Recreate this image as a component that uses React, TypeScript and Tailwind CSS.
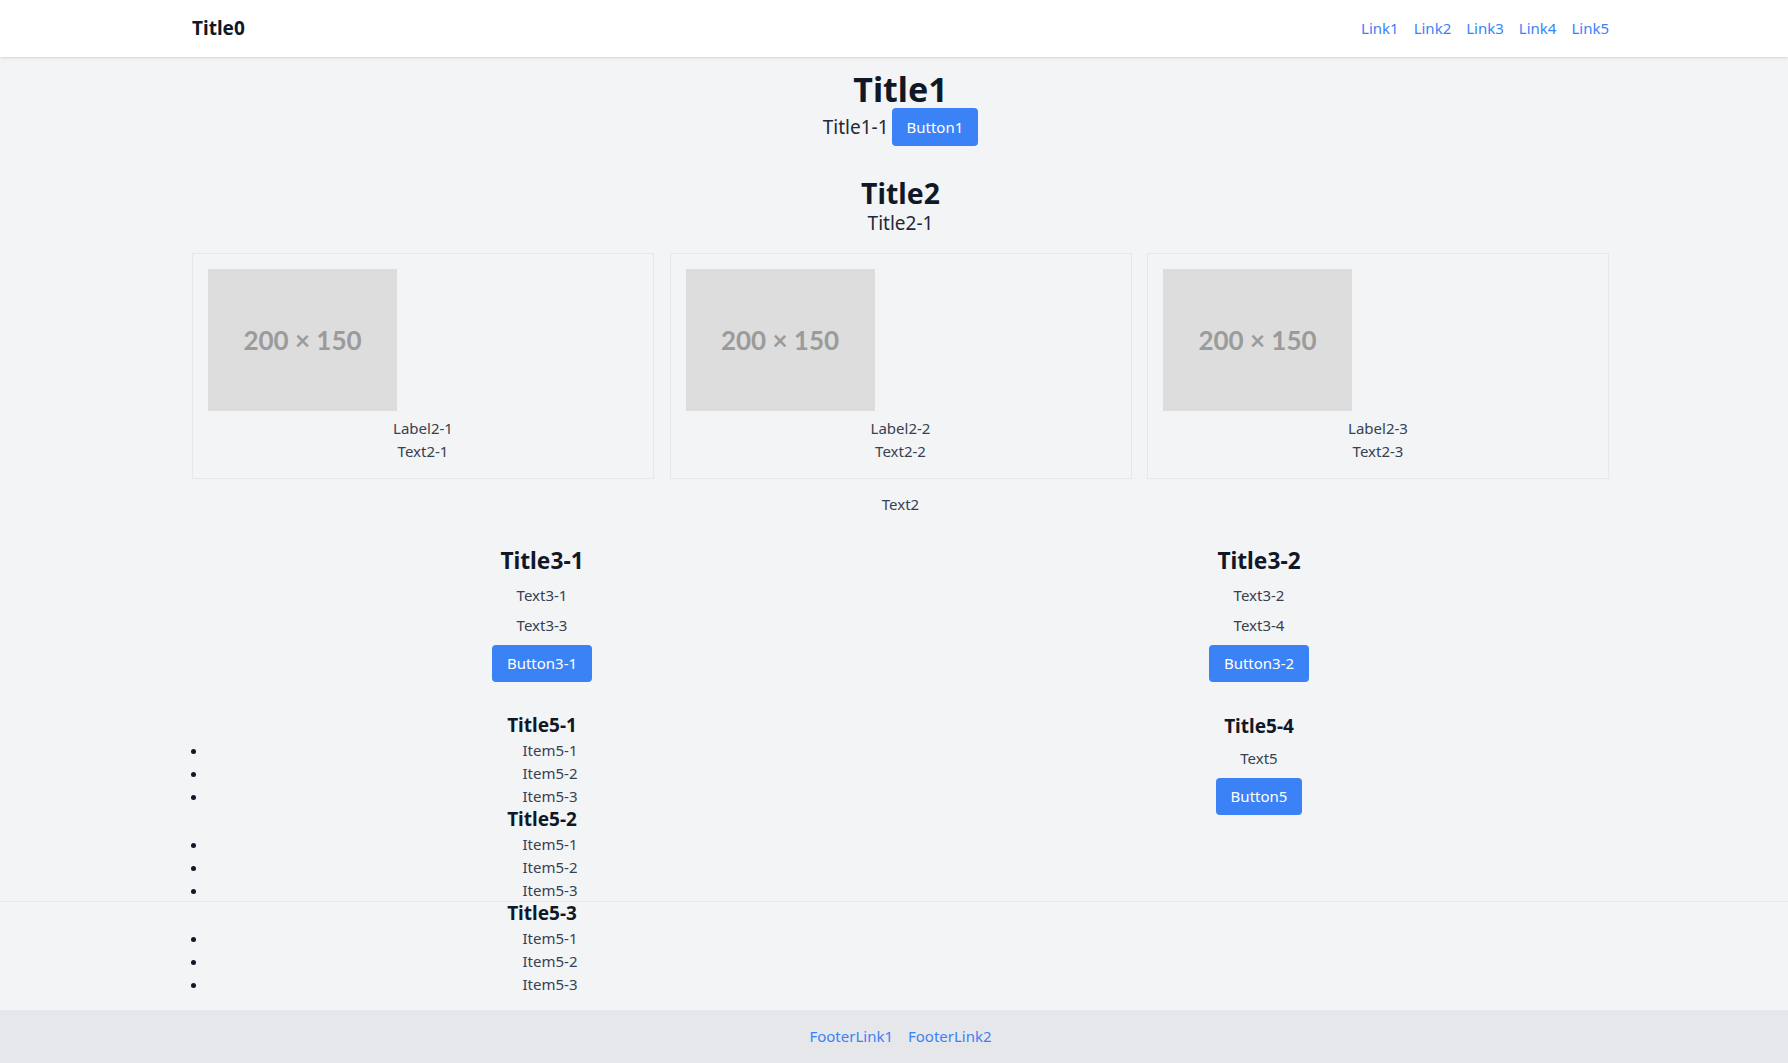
import React from "react";

const cards = [
  { label: "Label2-1", text: "Text2-1" },
  { label: "Label2-2", text: "Text2-2" },
  { label: "Label2-3", text: "Text2-3" },
];

const lists = ["Title5-1", "Title5-2", "Title5-3"];
const items = ["Item5-1", "Item5-2", "Item5-3"];

function Button({ label }: { label: string }) {
  return (
    <button className="rounded-[4px] bg-[#3b82f6] px-[15px] py-[7.5px] text-[15px] leading-[22.7px] text-white">
      {label}
    </button>
  );
}

function Placeholder() {
  return (
    <div className="flex h-[142px] w-[189px] items-center justify-center bg-[#dddddd] font-['Lato',sans-serif] text-[26px] font-bold text-[#9b9b9b]">
      200 × 150
    </div>
  );
}

export default function App() {
  return (
    <div className="relative flex min-h-screen flex-col bg-gray-100 font-['Noto_Sans','Segoe_UI',sans-serif] text-[15px] leading-[22.7px] text-gray-700">
      <header className="relative z-10 flex h-[57px] items-center justify-between bg-white pl-[192px] pr-[179px] shadow">
        <h1 className="text-[19px] font-bold text-gray-900">Title0</h1>
        <nav className="flex gap-[15px] text-[#3b82f6]">
          <a href="#">Link1</a>
          <a href="#">Link2</a>
          <a href="#">Link3</a>
          <a href="#">Link4</a>
          <a href="#">Link5</a>
        </nav>
      </header>

      <main className="flex-1 pl-[192px] pr-[179px] pt-[13px] pb-[13px]">
        <section className="flex flex-col items-center">
          <h2 className="text-[34px] leading-[38px] font-bold text-gray-900">Title1</h2>
          <div className="flex items-center gap-[3px]">
            <span className="text-[19px] leading-[26.5px] text-gray-800">Title1-1</span>
            <Button label="Button1" />
          </div>
        </section>

        <section className="mt-[30px] flex flex-col items-center">
          <h2 className="text-[28.4px] leading-[34px] font-bold text-gray-900">Title2</h2>
          <p className="text-[19px] leading-[26.5px] text-gray-800">Title2-1</p>
        </section>

        <div className="mt-[17px] grid grid-cols-3 gap-[15.5px]">
          {cards.map((c) => (
            <div key={c.label} className="flex flex-col border border-gray-200 p-[15px]">
              <Placeholder />
              <div className="mt-[6px] text-center">
                <p>{c.label}</p>
                <p>{c.text}</p>
              </div>
            </div>
          ))}
        </div>

        <p className="mt-[14px] text-center">Text2</p>

        <div className="mt-[31px] grid grid-cols-2 gap-[17px] text-center">
          <div className="flex flex-col items-center gap-[7.6px]">
            <h3 className="text-[22.7px] leading-[30px] font-bold text-gray-900">Title3-1</h3>
            <p>Text3-1</p>
            <p>Text3-3</p>
            <Button label="Button3-1" />
          </div>
          <div className="flex flex-col items-center gap-[7.6px]">
            <h3 className="text-[22.7px] leading-[30px] font-bold text-gray-900">Title3-2</h3>
            <p>Text3-2</p>
            <p>Text3-4</p>
            <Button label="Button3-2" />
          </div>
        </div>

        <div className="mt-[31px] grid grid-cols-2 gap-[17px] text-center">
          <div>
            {lists.map((t) => (
              <div key={t}>
                <h4 className="mb-[2px] text-[19px] leading-[24px] font-bold text-gray-900">{t}</h4>
                <ul className="list-disc pl-4 text-gray-700 marker:text-gray-900">
                  {items.map((i) => (
                    <li key={i}>{i}</li>
                  ))}
                </ul>
              </div>
            ))}
          </div>
          <div className="flex flex-col items-center gap-[7.6px]">
            <h4 className="text-[19px] leading-[26.5px] font-bold text-gray-900">Title5-4</h4>
            <p>Text5</p>
            <Button label="Button5" />
          </div>
        </div>
      </main>

      {/* stray rule across the page */}
      <div className="absolute left-0 right-0 top-[901px] h-px bg-gray-200" />

      <footer className="flex h-[53px] items-center justify-center gap-[15px] bg-gray-200 pl-[192px] pr-[179px] text-[#3b82f6]">
        <a href="#">FooterLink1</a>
        <a href="#">FooterLink2</a>
      </footer>
    </div>
  );
}
